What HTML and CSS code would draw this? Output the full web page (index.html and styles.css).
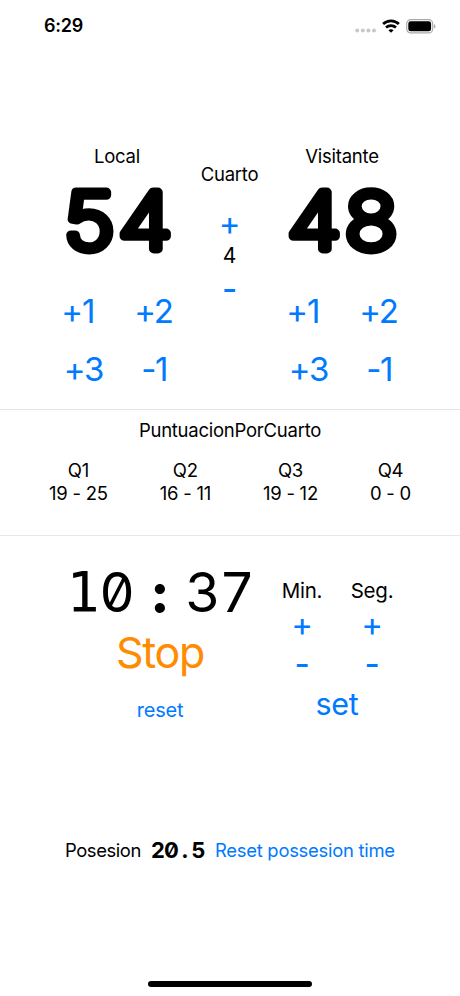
FILE: index.html
```html
<!DOCTYPE html>
<html lang="es">
<head>
    <meta charset="UTF-8">
    <meta name="viewport" content="width=device-width, initial-scale=1.0">
    <title>Marcador</title>
    <link rel="stylesheet" href="styles.css">
</head>
<body>
    <!-- Barra de estado -->
    <header class="status-bar">
        <span class="clock">6:29</span>
        <div class="status-icons">
            <svg class="dots" width="22" height="5" viewBox="0 0 22 5" fill="#c8c8c8">
                <circle cx="2.2" cy="2.5" r="2"/><circle cx="7.8" cy="2.5" r="2"/><circle cx="13.4" cy="2.5" r="2"/><circle cx="19" cy="2.5" r="2"/>
            </svg>
            <svg class="wifi" width="18" height="14" viewBox="0 0 18 14" fill="none" stroke="#000" stroke-width="2.7">
                <path d="M1.1 5.1C5.5.9 12.5.9 16.9 5.1"/>
                <path d="M4 8.5C6.8 5.9 11.2 5.9 14 8.5"/>
                <path d="M9 13.8L6.4 11.2C7.8 9.9 10.2 9.9 11.6 11.2Z" fill="#000" stroke="none"/>
            </svg>
            <svg class="battery" width="30" height="15" viewBox="0 0 30 15">
                <rect x="0.7" y="0.7" width="26" height="13.2" rx="4" fill="#fff" stroke="#aaa" stroke-width="1.2"/>
                <rect x="2.3" y="2.3" width="22.8" height="10" rx="2.4"/>
                <path d="M28 5v4.6c2-.9 2-3.7 0-4.6z" fill="#aaa"/>
            </svg>
        </div>
    </header>

    <!-- Marcador -->
    <main>
        <section class="scoreboard">
            <div class="team">
                <h2>Local</h2>
                <svg class="score" width="136" height="106" viewBox="0 0 136 106"><text transform="translate(71 82) scale(1.12 1)" text-anchor="middle">54</text></svg>
                <div class="points">
                    <button>+1</button>
                    <button>+2</button>
                </div>
                <div class="points second">
                    <button>+3</button>
                    <button>-1</button>
                </div>
            </div>
            <div class="quarter">
                <h2>Cuarto</h2>
                <button>+</button>
                <span class="quarter-number">4</span>
                <button class="minus">-</button>
            </div>
            <div class="team">
                <h2>Visitante</h2>
                <svg class="score" width="136" height="106" viewBox="0 0 136 106"><text transform="translate(70.5 82) scale(1.12 1)" text-anchor="middle">48</text></svg>
                <div class="points">
                    <button>+1</button>
                    <button>+2</button>
                </div>
                <div class="points second">
                    <button>+3</button>
                    <button>-1</button>
                </div>
            </div>
        </section>

        <!-- Puntos de cada cuarto -->
        <section class="quarters">
            <h2>PuntuacionPorCuarto</h2>
            <div class="quarter-list">
                <div>Q1<br>19 - 25</div>
                <div>Q2<br>16 - 11</div>
                <div>Q3<br>19 - 12</div>
                <div>Q4<br>0 - 0</div>
            </div>
        </section>

        <!-- Tiempo de juego -->
        <section class="timer">
            <div class="time-box">
                <div class="time"><span class="one">1</span><span>0</span><span class="colon">:</span><span>3</span><span>7</span></div>
                <button class="stop">Stop</button>
                <button class="reset">reset</button>
            </div>
            <div class="time-set">
                <div class="adjust">
                    <span>Min.</span>
                    <span>Seg.</span>
                    <button>+</button>
                    <button>+</button>
                    <button class="minus">-</button>
                    <button class="minus">-</button>
                </div>
                <button class="set">set</button>
            </div>
        </section>

        <!-- Posesion -->
        <section class="possession">
            <span class="label">Posesion</span>
            <span class="possession-time"><span>2</span><span>0</span><span>.</span><span>5</span></span>
            <button>Reset possesion time</button>
        </section>
    </main>
    <div class="home-indicator"></div>
</body>
</html>
```
FILE: styles.css
```css
* {
    box-sizing: border-box;
}
body {
    margin: 0;
    height: 996px;
    display: flex;
    flex-direction: column;
    background-color: #fff;
    color: #000;
    font-family: Inter, sans-serif;
    font-size: 18.5px;
    line-height: 22px;
    letter-spacing: -0.25px;
    overflow: hidden;
}
h2 {
    margin: 0;
    font-size: inherit;
    font-weight: 400;
}
button {
    padding: 0;
    border: none;
    background: none;
    color: #007aff;
    font: inherit;
    letter-spacing: inherit;
    white-space: nowrap;
    cursor: pointer;
}

/* Barra de estado */
.status-bar {
    height: 145px;
    padding: 15px 24px 0 44px;
    display: flex;
    justify-content: space-between;
    align-items: flex-start;
}
.clock {
    font-size: 18px;
    font-weight: 600;
}
.status-icons {
    height: 22px;
    display: flex;
    align-items: center;
}
.dots {
    margin: 8px 5px 0 0;
}
.wifi {
    margin-right: 6px;
}

/* Marcador */
.scoreboard {
    height: 264px;
    padding: 0 48px 0 47px;
    display: flex;
    justify-content: space-between;
}
.team {
    width: 140px;
    display: flex;
    flex-direction: column;
    align-items: center;
}
.score {
    font-size: 78px;
    font-weight: 200;
    letter-spacing: 3.5px;
    stroke: #000;
    stroke-width: 8.8px;
    stroke-linejoin: round;
    overflow: visible;
}
.points {
    margin-top: 9px;
    display: flex;
    gap: 40px;
    font-size: 33px;
    line-height: 58px;
    letter-spacing: -1.2px;
}
.points.second {
    margin: 0 3px 0 0;
    gap: 38px;
}
.quarter {
    padding-top: 18px;
    display: flex;
    flex-direction: column;
    align-items: center;
}
.quarter button {
    height: 34px;
    font-size: 33px;
    line-height: 34px;
}
.quarter h2 {
    margin-bottom: 21px;
}
.quarter-number {
    font-size: 21px;
    line-height: 32px;
}
.quarter .minus,
.adjust .minus {
    font-weight: 500;
}

/* Puntos de cada cuarto */
.quarters {
    height: 127px;
    padding-top: 9px;
    border-top: 1px solid #e4e4e4;
    border-bottom: 1px solid #e8e8e8;
    text-align: center;
}
.quarter-list {
    margin-top: 18px;
    padding: 0 49px;
    display: flex;
    justify-content: space-between;
    line-height: 23px;
}

/* Tiempo de juego */
.timer {
    height: 301px;
    padding: 26px 53px 0 66px;
    display: flex;
    justify-content: space-between;
}
.time-box,
.time-set {
    display: flex;
    flex-direction: column;
    align-items: center;
}
.time {
    display: flex;
    font-size: 55px;
    line-height: 60px;
    letter-spacing: 0;
    font-feature-settings: "zero", "tnum";
}
.time span {
    width: 34px;
    display: flex;
    justify-content: center;
}
.time .one {
    font-family: "DejaVu Sans Mono", monospace;
}
.time .colon {
    width: 52px;
    font-weight: 800;
}
.stop {
    margin-top: 3px;
    color: #ff8c00;
    font-size: 43px;
    line-height: 54px;
    letter-spacing: -1.3px;
}
.reset {
    margin-top: 20px;
    font-size: 20px;
}
.time-set {
    width: 140px;
    padding-top: 17px;
}
.adjust {
    display: grid;
    grid-template-columns: 70px 70px;
    grid-template-rows: 24px 42px 38px;
    justify-items: center;
    align-items: center;
    font-size: 20.5px;
}
.adjust button {
    font-size: 33px;
}
.set {
    margin-top: 4px;
    font-size: 30.5px;
    line-height: 34px;
}

/* Posesion */
.possession {
    padding: 2px 0 0 65px;
    display: flex;
    align-items: center;
    font-size: 18.4px;
    letter-spacing: -0.25px;
}
.possession .label {
    letter-spacing: -0.4px;
}
.possession-time {
    margin: 0 10px;
    display: flex;
    font-size: 22px;
    font-weight: 700;
    font-feature-settings: "zero";
}
.possession-time span {
    width: 13.5px;
    display: flex;
    justify-content: center;
}

.home-indicator {
    width: 164px;
    height: 6px;
    margin: auto auto 9px;
    border-radius: 3px;
    background-color: #000;
}
```
